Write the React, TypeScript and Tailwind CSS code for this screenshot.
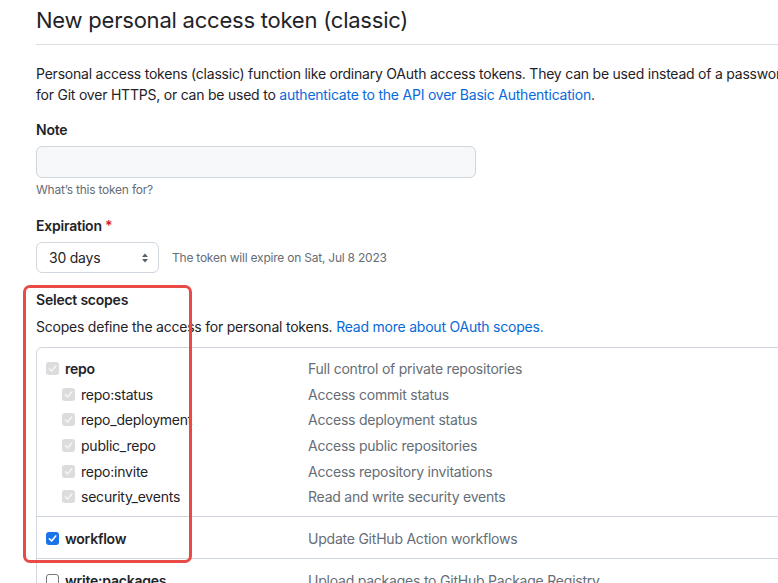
import React from "react";

const font = { fontFamily: "Inter, 'Noto Sans', sans-serif" };

function Check({ kind }: { kind: "disabled" | "checked" | "empty" }) {
  if (kind === "empty") {
    return <span className="inline-block w-[13px] h-[13px] rounded-[3px] border border-[#7a7a7a] bg-white shrink-0" />;
  }
  const bg = kind === "checked" ? "bg-[#1a73e8]" : "bg-[#dcdcdc]";
  const stroke = kind === "checked" ? "#ffffff" : "#f4f4f4";
  return (
    <span className={`inline-flex items-center justify-center w-[13px] h-[13px] rounded-[3px] ${bg} shrink-0`}>
      <svg width="9" height="9" viewBox="0 0 10 10" fill="none">
        <path d="M1.5 5.3 L4 7.8 L8.6 2.2" stroke={stroke} strokeWidth="1.8" strokeLinecap="round" strokeLinejoin="round" />
      </svg>
    </span>
  );
}

type Row = { name: string; desc: string; nested?: boolean; kind: "disabled" | "checked" | "empty" };

function ScopeRow({ r }: { r: Row }) {
  return (
    <div className="flex items-center h-[25.6px]">
      <div className={`flex items-center w-[262px] ${r.nested ? "pl-[16px]" : ""}`}>
        <Check kind={r.kind} />
        <span className={`ml-[6px] text-[14px] leading-[21px] text-[#1f2328] ${r.nested ? "font-normal" : "font-semibold"}`}>{r.name}</span>
      </div>
      <div className="text-[14px] leading-[21px] text-[#656d76] whitespace-nowrap">{r.desc}</div>
    </div>
  );
}

export default function App() {
  const repo: Row[] = [
    { name: "repo", desc: "Full control of private repositories", kind: "disabled" },
    { name: "repo:status", desc: "Access commit status", nested: true, kind: "disabled" },
    { name: "repo_deployment", desc: "Access deployment status", nested: true, kind: "disabled" },
    { name: "public_repo", desc: "Access public repositories", nested: true, kind: "disabled" },
    { name: "repo:invite", desc: "Access repository invitations", nested: true, kind: "disabled" },
    { name: "security_events", desc: "Read and write security events", nested: true, kind: "disabled" },
  ];
  return (
    <div className="relative w-[778px] h-[583px] overflow-hidden bg-white tracking-[-0.014em]" style={font}>
      <div className="pl-[36px] w-[1000px]">
        <div className="pt-[2px] pb-[6px] border-b border-[#d8dee4]">
          <h1 className="text-[22px] leading-[36px] font-normal text-[#1f2328] tracking-[-0.01em]">New personal access token (classic)</h1>
        </div>
        <p className="mt-[18px] text-[14px] leading-[21px] text-[#1f2328] whitespace-nowrap">
          Personal access tokens (classic) function like ordinary OAuth access tokens. They can be used instead of a password
          <br />
          for Git over HTTPS, or can be used to{" "}
          <span className="text-[#0969da]">authenticate to the API over Basic Authentication</span>.
        </p>

        <div className="mt-[14px] text-[14px] leading-[21px] font-semibold text-[#1f2328]">Note</div>
        <div className="mt-[6px] w-[440px] h-[32px] rounded-[6px] border border-[#d0d7de] bg-[#f6f8fa]" />
        <div className="mt-[3px] text-[12px] leading-[18px] text-[#656d76]">What’s this token for?</div>

        <div className="mt-[16px] text-[14px] leading-[21px] font-semibold text-[#1f2328]">
          Expiration <span className="text-[#cf222e]">*</span>
        </div>
        <div className="mt-[6px] flex items-center">
          <div className="w-[123px] h-[31px] rounded-[6px] border border-[#d0d7de] bg-white flex items-center justify-between pl-[12px] pr-[9px]">
            <span className="text-[14px] text-[#1f2328]">30 days</span>
            <svg width="8" height="12" viewBox="0 0 8 12">
              <path d="M4 1.5 L7 5 H1 Z" fill="#57606a" />
              <path d="M4 10.5 L7 7 H1 Z" fill="#57606a" />
            </svg>
          </div>
          <span className="ml-[13px] text-[12px] text-[#656d76]">The token will expire on Sat, Jul 8 2023</span>
        </div>

        <div className="mt-[16px] text-[14px] leading-[21px] font-semibold text-[#1f2328]">Select scopes</div>
        <div className="mt-[6px] text-[14px] leading-[21px] text-[#1f2328] whitespace-nowrap">
          Scopes define the access for personal tokens.{" "}
          <span className="text-[#0969da]">Read more about OAuth scopes.</span>
        </div>

        <div className="mt-[10px] w-[900px] border border-[#d0d7de] rounded-[6px]">
          <div className="pl-[9px] pt-[8px] pb-[6px] border-b border-[#d0d7de]">
            {repo.map((r) => (
              <ScopeRow key={r.name} r={r} />
            ))}
          </div>
          <div className="pl-[9px] pt-[9px] pb-[7px] border-b border-[#d0d7de]">
            <ScopeRow r={{ name: "workflow", desc: "Update GitHub Action workflows", kind: "checked" }} />
          </div>
          <div className="pl-[9px] pt-[9px] pb-[7px]">
            <ScopeRow r={{ name: "write:packages", desc: "Upload packages to GitHub Package Registry", kind: "empty" }} />
          </div>
        </div>
      </div>

      <div className="absolute left-[23px] top-[285px] w-[169px] h-[278px] border-[3px] border-[#ea4a46] rounded-[7px] pointer-events-none" />
    </div>
  );
}
